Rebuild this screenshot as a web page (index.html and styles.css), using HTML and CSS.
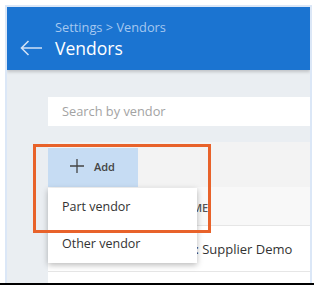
FILE: index.html
```html
<!DOCTYPE html>
<html>
<head>
<link rel="stylesheet" href="styles.css">
</head>
<body>

<div class="shot">
  <div class="header">
    <p class="crumb">Settings &gt; Vendors</p>
    <div class="title-row">
      <svg class="back" width="23" height="16" viewBox="0 0 23 16">
        <path d="M22 8H1.5M8.5 1L1.5 8l7 7" fill="none" stroke="#cfe0f6" stroke-width="1.6"/>
      </svg>
      <h2>Vendors</h2>
    </div>
  </div>

  <div class="content">
    <div class="search">Search by vendor</div>

    <div class="panel">
      <div class="toolbar">
        <div class="add-btn">
          <svg width="14" height="14" viewBox="0 0 14 14">
            <path d="M7 0v14M0 7h14" stroke="#444" stroke-width="1.3"/>
          </svg>
          <span>Add</span>
        </div>
      </div>
      <div class="row head"><span class="cell name">NAME</span></div>
      <div class="row"><span class="cell vendor">Contoso: Supplier Demo</span></div>
      <div class="row"></div>
    </div>

    <!-- open menu of the Add button -->
    <div class="menu">
      <div class="menu-item">Part vendor</div>
      <div class="menu-item">Other vendor</div>
    </div>

    <!-- highlight box drawn over the shot -->
    <div class="mark"></div>
  </div>
</div>
<div class="edge"></div>

</body>
</html>
```

FILE: styles.css
```css
body {
    margin: 0;
    background-color: #ffffff;
    font-family: "Open Sans", "Noto Sans", sans-serif;
    width: 316px;
    height: 289px;
    overflow: hidden;
}
.shot {
    margin: 5px 0 0 5px;
    width: 303px;
    height: 276px;
    border: 2px solid #dbe7f7;
    border-bottom: none;
    display: flex;
    flex-direction: column;
    overflow: hidden;
}
.header {
    background-color: #1b74d1;
    height: 63px;
    flex: none;
    box-shadow: 0 2px 3px rgba(0, 0, 0, 0.18);
    position: relative;
    z-index: 1;
}
.crumb {
    margin: 12px 0 0 48px;
    font-size: 12.8px;
    line-height: 16px;
    color: #a5c8f0;
}
.title-row {
    display: flex;
    align-items: center;
    margin-top: 1px;
    margin-left: 13px;
}
.back {
    margin-right: 12px;
}
h2 {
    margin: 0;
    font-size: 17.5px;
    font-weight: 400;
    line-height: 24px;
    color: #ffffff;
}
.content {
    flex: 1;
    background-color: #eaeef2;
    padding: 27px 0 0 41px;
    position: relative;
}
.search {
    background-color: #ffffff;
    height: 29px;
    line-height: 29px;
    padding-left: 14px;
    font-size: 12.8px;
    color: #a3a3a3;
}
.panel {
    margin-top: 16px;
    background-color: #ffffff;
}
.toolbar {
    background-color: #f3f3f3;
    padding-top: 6px;
    height: 39px;
}
.add-btn {
    width: 90px;
    height: 39px;
    background-color: #c6dcf3;
    display: flex;
    align-items: center;
    gap: 10px;
    padding-left: 22px;
    padding-bottom: 3px;
    box-sizing: border-box;
    font-size: 11px;
    font-weight: 600;
    color: #444;
}
.row {
    height: 45px;
    border-bottom: 1px solid #e6e6e6;
    display: flex;
    align-items: center;
    font-size: 13px;
    color: #333;
}
.row.head {
    height: 38px;
    background-color: #f8f8f8;
    font-size: 11px;
    font-weight: 600;
    color: #555;
}
.cell {
    white-space: nowrap;
}
.name {
    padding-left: 128px;
    padding-top: 3px;
}
.vendor {
    padding-left: 97px;
}
.menu {
    position: absolute;
    left: 41px;
    top: 118px;
    width: 149px;
    padding: 0 0 1px;
    background-color: #ffffff;
    box-shadow: 0 2px 6px rgba(0, 0, 0, 0.28);
}
.menu-item {
    height: 37px;
    line-height: 37px;
    padding-left: 14px;
    font-size: 12.5px;
    color: #333;
}
.mark {
    position: absolute;
    left: 26px;
    top: 74px;
    width: 172px;
    height: 83px;
    border: 3px solid #e8622a;
}
.edge {
    height: 2px;
    width: 314px;
    background-color: #000;
}
```
